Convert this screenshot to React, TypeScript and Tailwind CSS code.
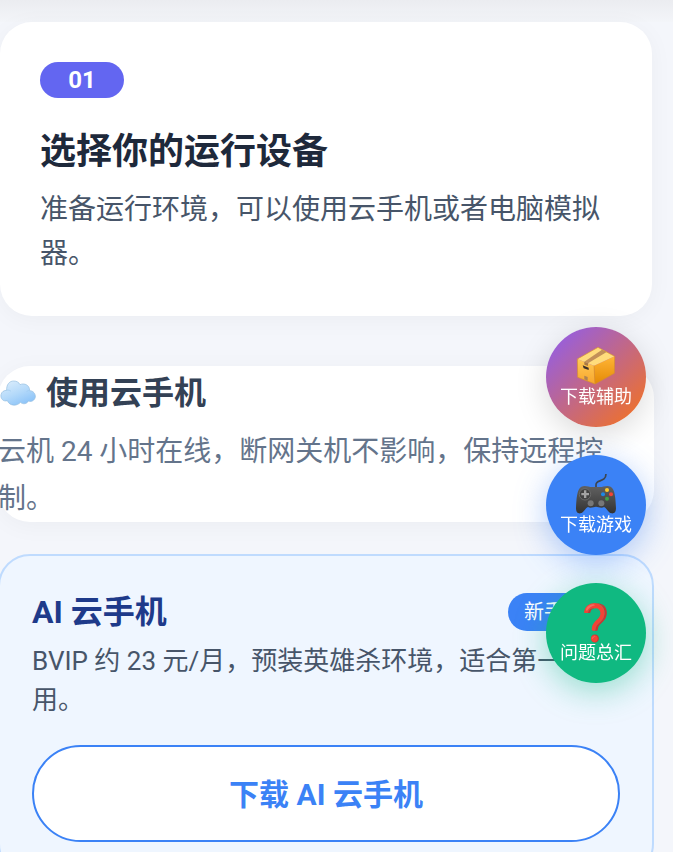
import React from 'react';

function CloudIcon() {
  return (
    <svg viewBox="0 0 108 78" className="ml-0.5 h-[26px] w-9" aria-hidden="true">
      <defs>
        <linearGradient id="cloud" x1="0.2" y1="0" x2="0.8" y2="1">
          <stop offset="0" stopColor="#d9ecfc" />
          <stop offset="0.5" stopColor="#b3d9fa" />
          <stop offset="1" stopColor="#86c0f8" />
        </linearGradient>
      </defs>
      <path
        d="M22 62C9 66 1 55 3 44C5 35 12 31 20 31C19 14 28 3 41 3C50 3 57 7 60 14C73 8 89 15 89 32C100 32 107 42 106 51C104 62 93 67 85 63C81 72 69 74 61 67C52 79 29 79 22 62Z"
        fill="url(#cloud)"
        stroke="#92bce0"
        strokeWidth="2"
      />
      <path d="M20 31C25 29 30 31 33 34M89 32C85 31 81 33 79 36" fill="none" stroke="#9fcaf0" strokeWidth="2" />
    </svg>
  );
}

function PackageIcon() {
  return (
    <svg viewBox="0 0 120 120" className="size-10" aria-hidden="true">
      <defs>
        <linearGradient id="boxLeft" x1="0" y1="0" x2="0" y2="1">
          <stop offset="0" stopColor="#ffca57" />
          <stop offset="1" stopColor="#f8a62c" />
        </linearGradient>
        <linearGradient id="boxRight" x1="0" y1="0" x2="0" y2="1">
          <stop offset="0" stopColor="#ffb536" />
          <stop offset="1" stopColor="#e48a05" />
        </linearGradient>
      </defs>
      <path d="M4 36L54 56L57 111L5 91Z" fill="url(#boxLeft)" />
      <path d="M54 56L116 28L115 79L57 111Z" fill="url(#boxRight)" />
      <path d="M4 36L66 1L116 28L54 56Z" fill="#ffdc7c" />
      <path d="M78 8L92 15L36 49L25 44Z" fill="#c29058" />
      <path d="M25 44L36 49V57L25 53Z" fill="#a87945" />
      <path d="M54 56L57 111" stroke="#d99125" strokeWidth="2" />
      <path d="M4 36L66 1L116 28L115 79L57 111L5 91Z" fill="none" stroke="#d68f2c" strokeWidth="2" strokeLinejoin="round" />
      <path d="M20 55L38 62V69L23 64Z" fill="#3d3028" />
      <path d="M25 86L35 90V101L25 97Z" fill="#ae8252" />
    </svg>
  );
}

function GamepadIcon() {
  return (
    <svg viewBox="0 0 120 120" className="size-10 overflow-visible" aria-hidden="true">
      <defs>
        <linearGradient id="pad" x1="0" y1="0" x2="0" y2="1">
          <stop offset="0" stopColor="#616161" />
          <stop offset="1" stopColor="#333333" />
        </linearGradient>
      </defs>
      <path d="M60 37V29C60 12 89 24 90 -3" fill="none" stroke="#3c4550" strokeWidth="5" />
      <path
        d="M16 35C28 29 40 37 50 36H70C80 37 92 29 104 35C117 41 119 73 120 99C120 112 114 116 107 115C96 113 92 99 84 96C76 101 66 95 60 95S44 101 36 96C28 99 24 113 13 115C6 116 0 112 0 99C1 73 3 41 16 35Z"
        fill="url(#pad)"
      />
      <circle cx="27" cy="58" r="17" fill="#424242" stroke="#777777" strokeWidth="2" />
      <path d="M24 46H31V54H39V61H31V69H24V61H16V54H24Z" fill="#a3a3a3" />
      <circle cx="44" cy="85" r="9" fill="#777777" />
      <circle cx="76" cy="85" r="9" fill="#777777" />
      <circle cx="93" cy="45" r="6" fill="#ffca28" />
      <circle cx="81" cy="58" r="6" fill="#1e88e5" />
      <circle cx="105" cy="58" r="6" fill="#f44336" />
      <circle cx="93" cy="71" r="6" fill="#43a047" />
    </svg>
  );
}

const floatingLinks = [
  {
    icon: <PackageIcon />,
    label: '下载辅助',
    style: 'bg-[linear-gradient(135deg,#8b5cf6,#f97316)] shadow-[0_8px_32px_rgba(0,0,0,0.15)]',
  },
  {
    icon: <GamepadIcon />,
    label: '下载游戏',
    style: 'bg-[#3b82f6] shadow-[0_8px_32px_rgba(59,130,246,0.4)]',
  },
  {
    icon: '❓',
    label: '问题总汇',
    style: 'bg-[#10b981] shadow-[0_8px_32px_rgba(16,185,129,0.4)]',
  },
];

function FloatingLinks() {
  return (
    <nav className="fixed right-[27px] top-[327px] flex flex-col gap-7">
      {floatingLinks.map((link) => (
        <a
          key={link.label}
          href="#"
          className={`flex size-[100px] flex-col items-center justify-center rounded-full text-white ${link.style}`}
        >
          <span className="text-[36px] leading-10">{link.icon}</span>
          <span className="text-lg leading-5">{link.label}</span>
        </a>
      ))}
    </nav>
  );
}

export default function App() {
  return (
    <div className="h-screen overflow-hidden bg-[#f4f6fb] font-['Roboto','Noto_Sans_CJK_SC','Noto_Color_Emoji',sans-serif]">
      {/* Shadow cast by the header above */}
      <div className="h-[22px] bg-[linear-gradient(#ebecf0,#f3f5f9)]" />

      <main className="pr-[21px]">
        {/* Step card */}
        <section className="rounded-[32px] bg-white p-10 shadow-[0_4px_24px_rgba(0,0,0,0.04)]">
          <span className="flex h-9 w-21 items-center justify-center rounded-full bg-[#6366f1] text-2xl font-bold text-white">
            01
          </span>
          <h2 className="mt-8 text-4xl leading-11 font-bold text-[#1e293b]">选择你的运行设备</h2>
          <p className="mt-3.5 text-[28px] leading-11 text-[#475569]">
            准备运行环境，可以使用云手机或者电脑模拟器。
          </p>
        </section>

        <div className="-mx-0.5 mt-[50px]">
          {/* Cloud phone intro */}
          <section className="rounded-[32px] bg-white shadow-[0_4px_24px_rgba(0,0,0,0.04)]">
            <h3 className="flex items-center gap-2.5 text-[32px] leading-[54px] font-bold text-[#334155]">
              <CloudIcon />
              使用云手机
            </h3>
            <p className="mt-2 pr-8 text-[28px] leading-[47px] text-[#64748b]">
              云机 24 小时在线，断网关机不影响，保持远程控制。
            </p>
          </section>

          {/* Recommended option */}
          <section className="mt-8 rounded-[32px] border-2 border-[#bfdbfe] bg-[#eff6ff] p-8">
            <div className="flex items-center justify-between">
              <h3 className="text-[32px] leading-12 font-bold text-[#1e3a8a]">AI 云手机</h3>
              <span className="rounded-full bg-[#3b82f6] px-4 py-1 text-xl leading-[30px] text-white">
                新手推荐
              </span>
            </div>
            <p className="mt-1.5 text-[26px] leading-[39px] text-[#475569]">
              BVIP 约 23 元/月，预装英雄杀环境，适合第一次使用。
            </p>
            <button
              type="button"
              className="mt-[25px] w-full rounded-full border-2 border-[#3b82f6] bg-white pt-6 pb-[21px] text-3xl leading-12 font-bold text-[#3b82f6]"
            >
              下载 AI 云手机
            </button>
          </section>
        </div>
      </main>

      <FloatingLinks />
    </div>
  );
}
